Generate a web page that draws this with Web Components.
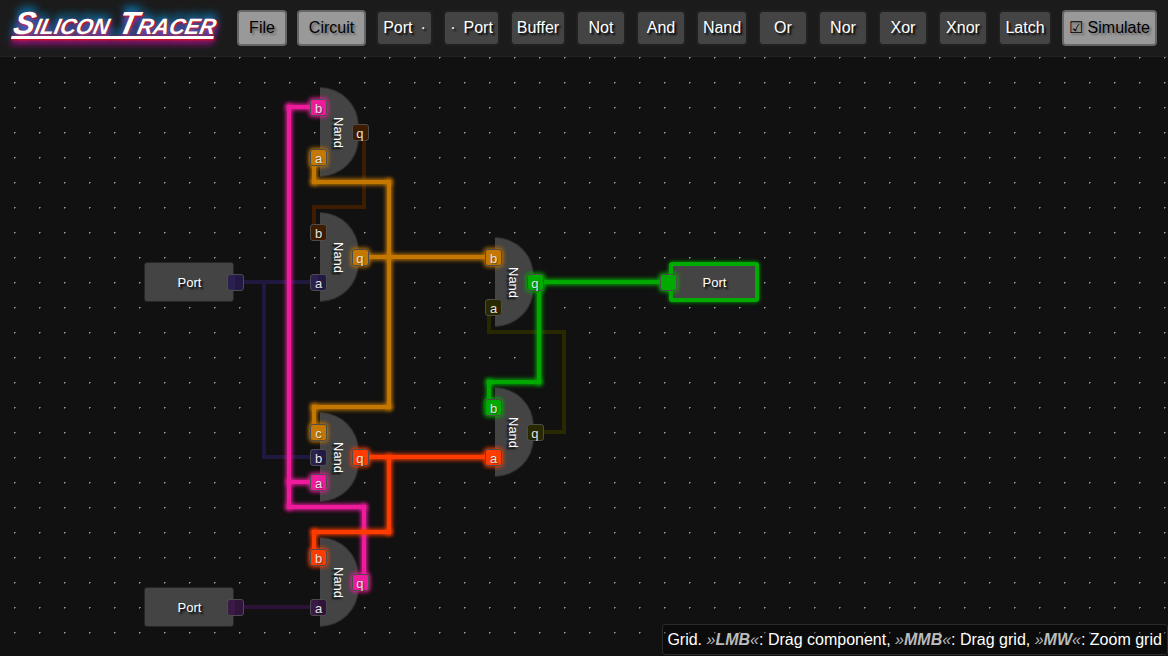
<!DOCTYPE html>
<html lang="en"><head><meta charset="utf-8"><title>Silicon Tracer</title>
<style>html,body{margin:0;height:100%;overflow:hidden;background:#111}body{font:16px/18px "Liberation Sans",Arial,sans-serif;color:#fff}</style></head>
<body><silicon-tracer></silicon-tracer>
<script>
const define=(name,css,html,setup)=>customElements.define(name,class extends HTMLElement{
  connectedCallback(){
    if(this.shadowRoot)return;
    this.attachShadow({mode:'open'}).innerHTML=`<style>*{box-sizing:border-box}${css}</style>${html}`;
    if(setup)setup(this,this.shadowRoot);
  }
});
const place=(el,names)=>names.forEach(n=>{if(el.hasAttribute(n))el.style[({x:'left',y:'top',w:'width',h:'height'})[n]]=el.getAttribute(n)+'px'});

define('app-logo',`:host{display:block;box-sizing:border-box;width:237px;padding-left:11px;flex:none}
span{display:inline-block;white-space:nowrap;font:italic bold 32px/36px "Liberation Sans",Arial,sans-serif;font-variant:small-caps;letter-spacing:-.02px;text-decoration:underline;text-decoration-thickness:3px;text-underline-offset:2px;text-decoration-skip-ink:none;
transform:skewX(-12deg);transform-origin:0 34px;
text-shadow:1px 1px 2px #f00,-1px -4px 8px #0af,1px 4px 7px #f0c}`,`<span>Silicon Tracer</span>`);

define('tool-button',`:host{display:flex;box-sizing:border-box;flex:none;height:36px;border:2px solid #202020;border-radius:4px;background:#444;background-clip:padding-box;color:#fff;align-items:center;justify-content:center;white-space:pre;text-shadow:2px 2px 2px #000}
:host([menu]){background:#999;border-color:#666;color:#000;text-shadow:2px 2px 2px #666}
div{display:flex;gap:8px}`,`<div><slot></slot></div>`,el=>place(el,['w']));

define('tool-bar',`:host{display:flex;box-sizing:border-box;height:57px;padding-top:10px;background:#1b1b1b;border-bottom:1px solid #222;gap:10px;align-items:flex-start;position:relative}
app-logo{margin:-5px -10px 0 0}`,`<app-logo></app-logo><slot></slot>`);

define('wire-segment',`:host{position:absolute;background:var(--wire);box-shadow:var(--glow,none)}`,``);

define('port-pin',`:host{display:block;position:absolute;box-sizing:border-box;width:17px;height:17px;border:1px solid #4c4c4c;border-radius:3px;background:var(--wire);box-shadow:var(--glow,none);color:#e4e4e4;font-size:13px;line-height:17px;text-align:center;text-shadow:1px 1px 1px #0006}
:host([output]){padding-right:1.4px}`,`<slot></slot>`,el=>place(el,['x','y']));

define('nand-gate',`:host{position:absolute;display:flex;box-sizing:border-box;width:39px;height:90px;border:1px solid #2c2c2c;border-left:0;background:#444;border-radius:0 44px 44px 0;align-items:center;justify-content:center;font-size:13px;line-height:15px}
span{writing-mode:vertical-rl;text-shadow:2px 2px 2px #000;margin:2px 1px 0 0}`,`<span>Nand</span>`,el=>place(el,['x','y']));

define('io-port',`:host{position:absolute;display:flex;box-sizing:border-box;width:90px;height:40px;border:1px solid #262626;background:#444;border-radius:3px;align-items:center;justify-content:center;font-size:13px;text-shadow:2px 2px 2px #000}
:host([active]){border:4px solid #00aa00;box-shadow:0 0 4px #00aa00}
span{padding:1px 0 0 1px}`,`<span>Port</span>`,el=>place(el,['x','y']));

define('circuit-canvas',`:host{display:block;position:relative;flex:1;overflow:hidden;background:#111}
.space{position:absolute;left:0;top:-57px;width:1168px;height:656px}
.dots{position:absolute;inset:0}.dots rect{fill:#999}
`,`<div class="space"><svg class="dots" width="1168" height="656"><defs><pattern id="grid" width="25" height="25" x="14" y="7" patternUnits="userSpaceOnUse"><rect width="1" height="1"/><rect x="1" width="1" height="1" opacity=".6"/><rect y="1" width="1" height="1" opacity=".6"/></pattern></defs><rect width="1168" height="656" style="fill:url(#grid)"/></svg></div>`,(el,root)=>{
  const space=root.querySelector('.space');
  const palette={indigo:['#21183f'],plum:['#2d1238'],brown:['#3e1c00'],olive:['#292900'],orange:['#c47800',1],pink:['#ee1b9c',1],green:['#00aa00',1],red:['#ff3c00',1]};
  const paint=(n,c)=>{n.style.setProperty('--wire',palette[c][0]);if(palette[c][1])n.style.setProperty('--glow','0 0 4px 1px '+palette[c][0])};
  const add=(tag,attrs,text='')=>{const n=document.createElement(tag);for(const k in attrs)n.setAttribute(k,attrs[k]);n.textContent=text;space.append(n);return n};
  for(const [x,y] of [[320,87],[320,212],[320,412],[320,537],[495,237],[495,387]])add('nand-gate',{x,y});
  add('io-port',{x:144,y:262});add('io-port',{x:144,y:587});add('io-port',{x:669,y:262,active:''});
  const nets={
    indigo:[[235,282,314,282],[264,282,264,457],[264,457,314,457]],
    plum:[[239,607,314,607]],
    brown:[[364,132,364,207],[314,207,364,207],[314,207,314,232]],
    olive:[[489,307,489,332],[489,332,564,332],[564,332,564,432],[539,432,564,432]],
    orange:[[314,157,314,182],[314,182,389,182],[389,182,389,407],[314,407,389,407],[314,407,314,432],[364,257,489,257]],
    pink:[[289,107,314,107],[289,107,289,507],[289,482,314,482],[289,507,364,507],[364,507,364,582]],
    green:[[539,282,664,282],[539,282,539,382],[489,382,539,382],[489,382,489,407]],
    red:[[364,457,489,457],[389,457,389,532],[314,532,389,532],[314,532,314,557]]
  };
  for(const color in nets)for(const [a,b,c,d] of nets[color]){
    const n=add('wire-segment',{});
    Object.assign(n.style,{left:a-2+'px',top:b-2+'px',width:c-a+4+'px',height:d-b+4+'px'});paint(n,color);
  }
  const pins=[['b',310,107,'pink'],['a',310,157,'orange'],['q',352,132,'brown'],['b',310,232,'brown'],['a',310,282,'indigo'],['q',352,257,'orange'],
    ['c',310,432,'orange'],['b',310,457,'indigo'],['a',310,482,'pink'],['q',352,457,'red'],['b',310,557,'red'],['a',310,607,'plum'],['q',352,582,'pink'],
    ['b',485,257,'orange'],['a',485,307,'olive'],['q',527,282,'green'],['b',485,407,'green'],['a',485,457,'red'],['q',527,432,'olive'],
    ['',227,282,'indigo'],['',227,607,'plum'],['',660,282,'green']];
  for(const [t,x,y,c] of pins){const p=add('port-pin',t==='q'?{x,y:y-8,output:''}:{x,y:y-8},t);paint(p,c);
    if(c==='indigo')p.style.background='linear-gradient(90deg,#2c2050 50%,#241945 50%)';
    if(c==='plum')p.style.background='linear-gradient(90deg,#3a1a45 50%,#30143b 50%)'}
});

define('hint-bar',`:host{position:absolute;box-sizing:border-box;right:0;bottom:1px;height:31px;width:506px;border:1px solid #2b2b2b;border-radius:3px;background:#0005;padding:6px 0 0 4.4px;white-space:nowrap;line-height:18px}
i{color:#bbb}`,`Grid. <i>»<b>LMB</b>«</i>: Drag component, <i>»<b>MMB</b>«</i>: Drag grid, <i>»<b>MW</b>«</i>: Zoom grid`);

define('silicon-tracer',`:host{display:flex;flex-direction:column;height:100vh;position:relative}`,`
<tool-bar><tool-button menu w="50">File</tool-button><tool-button menu w="69">Circuit</tool-button>
<tool-button w="57"><span>Port</span><span>·</span></tool-button><tool-button w="57"><span>·</span><span>Port</span></tool-button>
<tool-button w="56">Buffer</tool-button><tool-button w="50">Not</tool-button><tool-button w="50">And</tool-button><tool-button w="52">Nand</tool-button><tool-button w="50">Or</tool-button><tool-button w="50">Nor</tool-button><tool-button w="50">Xor</tool-button><tool-button w="50">Xnor</tool-button><tool-button w="54">Latch</tool-button><tool-button menu w="95">☑ Simulate</tool-button></tool-bar>
<circuit-canvas></circuit-canvas><hint-bar></hint-bar>`);
</script></body></html>
